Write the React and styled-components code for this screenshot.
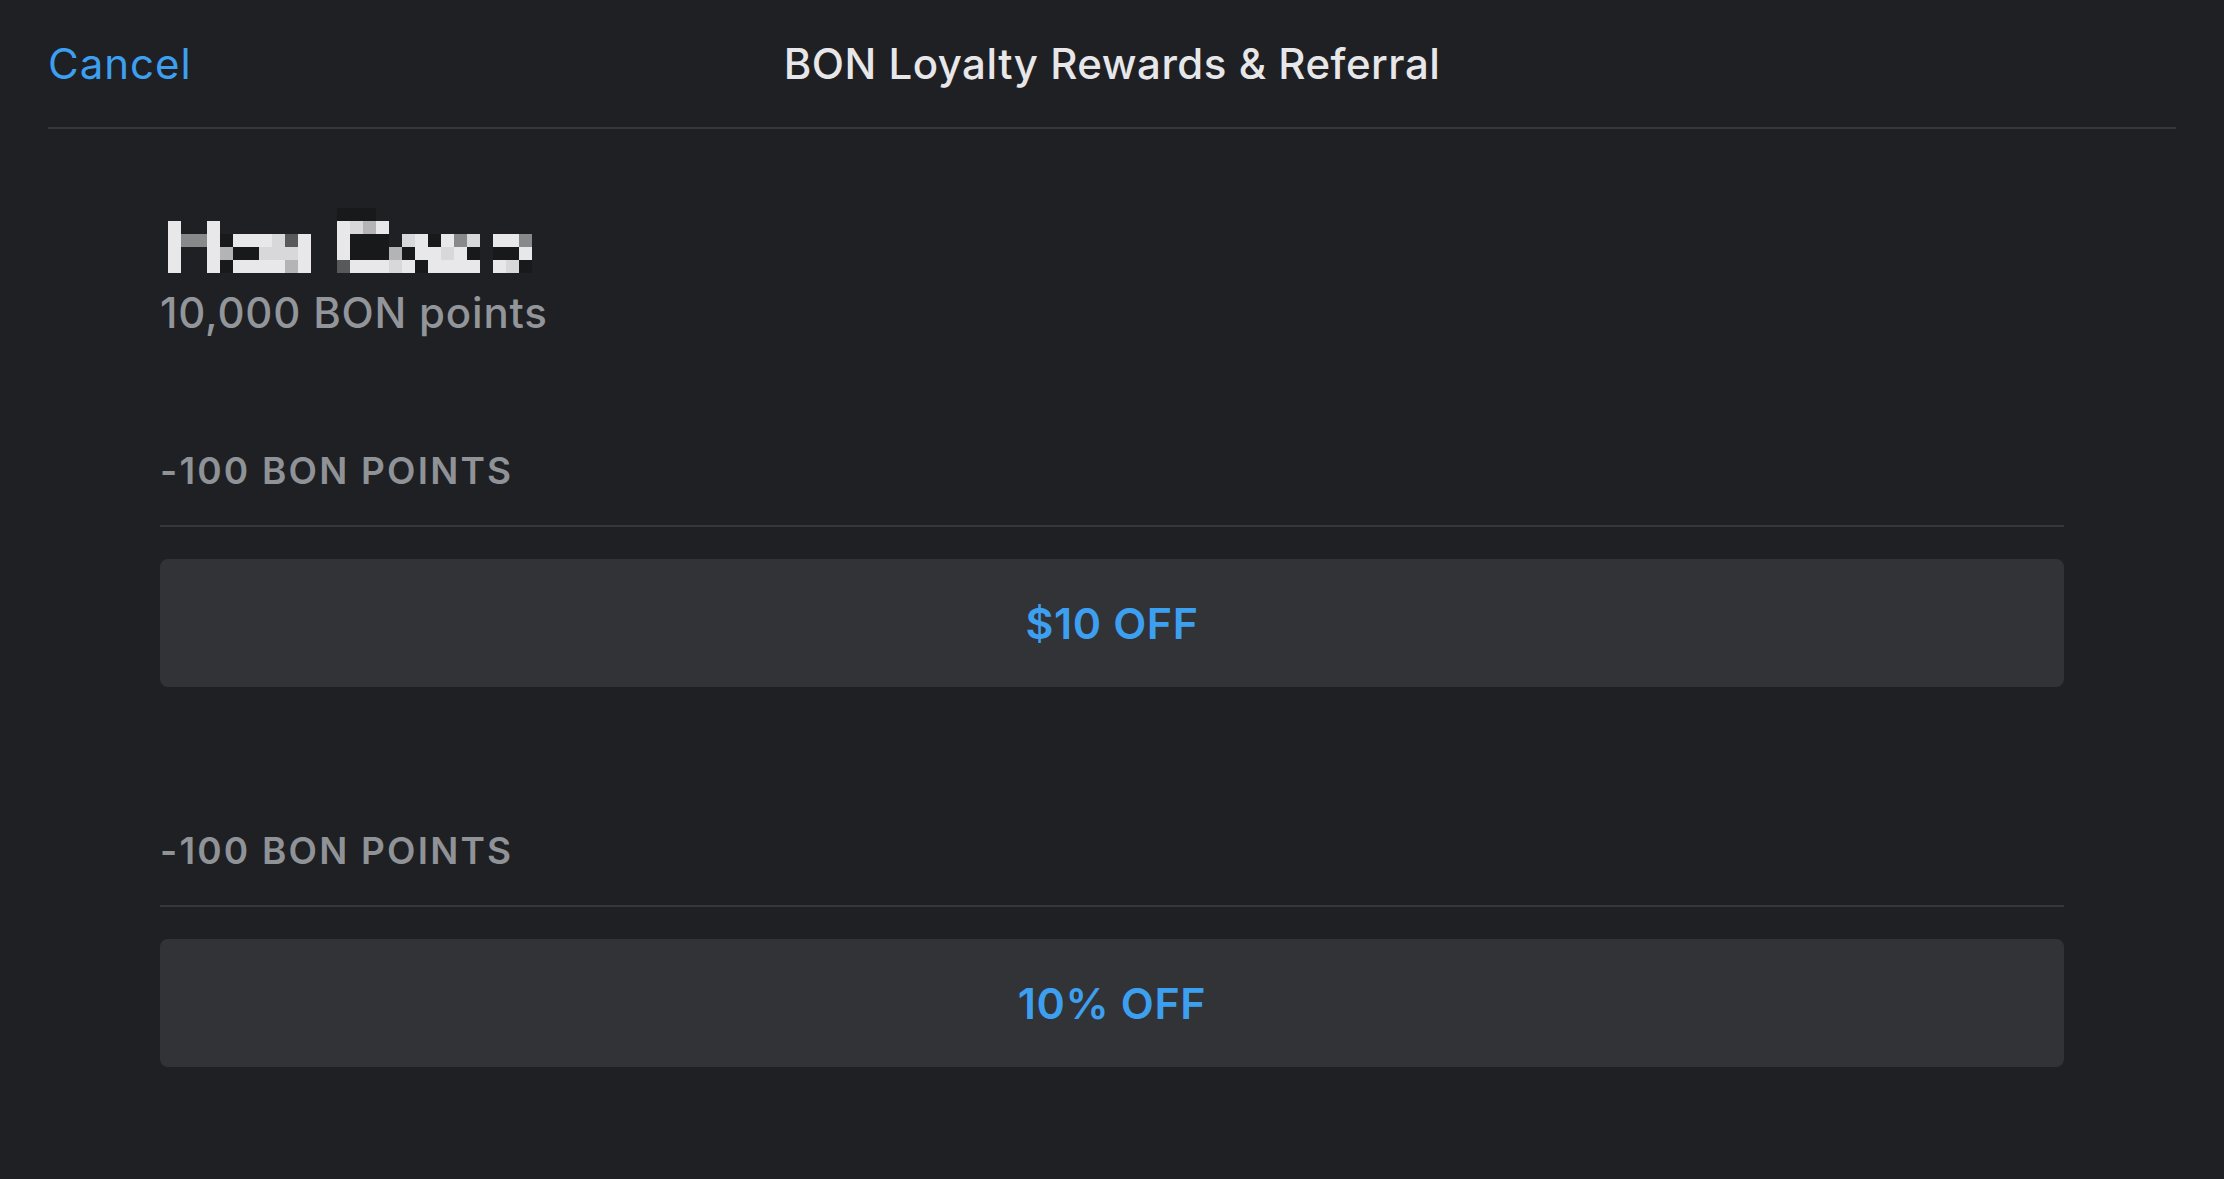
import React from 'react'
import styled, { createGlobalStyle } from 'styled-components'

const GlobalStyle = createGlobalStyle`
  html, body {
    margin: 0;
    padding: 0;
    background: #1f2023;
  }
  body {
    font-family: Inter, "Noto Sans", "Liberation Sans", sans-serif;
    -webkit-font-smoothing: antialiased;
  }
`

const Sheet = styled.div`
  min-height: 100vh;
  background: #1f2023;
`

const NavBar = styled.div`
  margin: 0 48px;
  height: 127px;
  border-bottom: 2px solid #36373a;
  display: grid;
  grid-template-columns: 1fr auto 1fr;
  align-items: center;
`

const NavButton = styled.div`
  color: #3d9ff0;
  font-size: 42px;
  line-height: 50px;
  font-weight: 400;
  letter-spacing: 1px;
`

const NavTitle = styled.div`
  color: #e7e7ea;
  font-size: 42px;
  line-height: 50px;
  font-weight: 500;
  letter-spacing: 0.5px;
`

const Content = styled.div`
  padding: 79px 160px 0;
`

const Mosaic = styled.svg`
  display: block;
  margin-left: 8px;
  shape-rendering: crispEdges;
`

const Points = styled.div`
  margin-top: 15px;
  color: #92959a;
  font-size: 42px;
  line-height: 50px;
  font-weight: 500;
  letter-spacing: 0.8px;
`

const Section = styled.div`
  margin-top: ${p => p.$gap}px;
`

const SectionLabel = styled.div`
  color: #8f9296;
  font-size: 37px;
  line-height: 44px;
  font-weight: 600;
  letter-spacing: 2.2px;
  padding-bottom: 32px;
  border-bottom: 2px solid #36373a;
`

const RewardButton = styled.div`
  margin-top: 32px;
  height: 128px;
  border-radius: 8px;
  background: #323336;
  display: flex;
  align-items: center;
  justify-content: center;
  color: #3d9ff0;
  font-size: 43px;
  font-weight: 600;
  letter-spacing: 0.6px;
`

const shades = {
  W: '#e8e8ea',
  L: '#d8d8da',
  G: '#b4b4b6',
  M: '#88898b',
  D: '#58595b',
  x: '#18191b',
}

const mosaicRows = [
  '.............xxx............',
  'W..W.........WLGW...........',
  'WMMWxWWWLDW..Wxxx.LWxWML.WWM',
  'W..WGxxLLLW..WxxxGxWWLWx.xxW',
  'W..WxWWWWGW..DWWWLWxWWWW.WLx',
]

const CELL = 13

const NameMosaic = () => (
  <Mosaic width={28 * CELL} height={5 * CELL} viewBox={`0 0 ${28 * CELL} ${5 * CELL}`}>
    {mosaicRows.map((row, r) =>
      row.split('').map((ch, c) =>
        shades[ch] ? (
          <rect key={`${r}-${c}`} x={c * CELL} y={r * CELL} width={CELL} height={CELL} fill={shades[ch]} />
        ) : null
      )
    )}
  </Mosaic>
)

const rewards = [
  { cost: '-100 BON POINTS', label: '$10 OFF', gap: 111 },
  { cost: '-100 BON POINTS', label: '10% OFF', gap: 142 },
]

const App = () => (
  <Sheet>
    <GlobalStyle />
    <NavBar>
      <NavButton>Cancel</NavButton>
      <NavTitle>BON Loyalty Rewards &amp; Referral</NavTitle>
      <div />
    </NavBar>
    <Content>
      <NameMosaic />
      <Points>10,000 BON points</Points>
      {rewards.map((r, i) => (
        <Section key={i} $gap={r.gap}>
          <SectionLabel>{r.cost}</SectionLabel>
          <RewardButton>{r.label}</RewardButton>
        </Section>
      ))}
    </Content>
  </Sheet>
)

export default App
